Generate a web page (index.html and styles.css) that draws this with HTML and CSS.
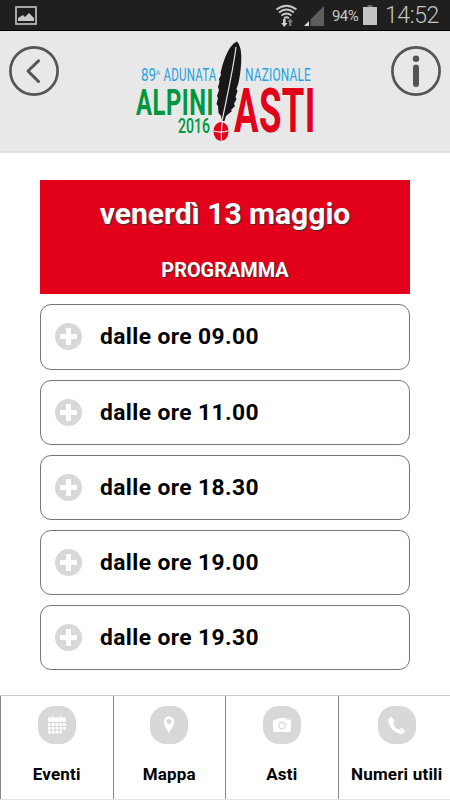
FILE: index.html
```html
<!DOCTYPE html>
<html lang="it">

<head>
    <meta charset="UTF-8">
    <meta name="viewport" content="width=device-width, initial-scale=1.0">
    <title>Alpini Asti 2016</title>
    <link rel="stylesheet" href="styles.css">
</head>

<body>
    <div class="statusbar">
        <svg class="picture" width="22" height="19" viewBox="0 0 22 19">
            <rect x="1" y="1" width="20" height="17" fill="none" stroke="#b5b5b5" stroke-width="1.8" />
            <path d="M3 15v-3l5-3 2 2 4-4 5 5v3z" fill="#c8c8c8" />
        </svg>
        <div class="status">
            <svg class="wifi" width="24" height="24" viewBox="0 0 24 24">
                <g fill="none" stroke="#c8c8c8" stroke-width="1.800">
                    <path d="M1.500 5.500q10-7.500 20 0M4 8.500q7.500-6 15 0M6.500 11.500q5-4 10 0M9 14.300q2.500-2 5 0" />
                </g>
                <path d="M8 15h2.600v4h2l-3.300 4-3.300-4h2z" fill="#d0d0d0" />
                <path d="M14 22v-4h-1.800l3-3.500 3 3.500h-1.800v4z" fill="#777" />
            </svg>
            <svg class="signal" width="20" height="20" viewBox="0 0 20 20">
                <path d="M20 0v20H6.500v-6.500z" fill="#5e5e5e" />
                <path d="M0 20l5-5v5z" fill="#ddd" />
            </svg>
            <span class="percent">94%</span>
            <svg class="battery" width="14" height="20" viewBox="0 0 14 20">
                <path d="M4.500 0h5v2h-5z" fill="#666" />
                <path d="M0 2h14v18H0z" fill="#c5c5c5" />
            </svg>
            <span class="clock">14:52</span>
        </div>
    </div>

    <header class="header">
        <svg class="round" width="50" height="50" viewBox="0 0 50 50">
            <g fill="none" stroke="#555" stroke-linecap="round" stroke-linejoin="round">
                <circle cx="25" cy="25" r="23.600" stroke-width="2.700" />
                <path d="M29.500 14.800L19 25l10.500 10.500" stroke-width="3" />
            </g>
        </svg>
        <svg class="logo" width="190" height="112" viewBox="130 40 190 112">
            <g fill="#1fa3e0" font-size="17.500">
                <text x="141" y="81" textLength="15" lengthAdjust="spacingAndGlyphs">89</text>
                <text x="156" y="74.500" font-size="8" textLength="4" lengthAdjust="spacingAndGlyphs">A</text>
                <text x="163.500" y="81" letter-spacing="0.300" textLength="53" lengthAdjust="spacingAndGlyphs">ADUNATA</text>
                <text x="245" y="81" letter-spacing="0.300" textLength="66" lengthAdjust="spacingAndGlyphs">NAZIONALE</text>
            </g>
            <g fill="#009640">
                <text x="136" y="115" font-size="36.500" font-weight="700" letter-spacing="0.800" textLength="78" lengthAdjust="spacingAndGlyphs">ALPINI</text>
                <text x="178" y="132.500" font-size="21" font-weight="500" textLength="32" lengthAdjust="spacingAndGlyphs">2016</text>
            </g>
            <text x="234" y="131.500" font-size="62" font-weight="700" fill="#e2001a" letter-spacing="0.800" textLength="82" lengthAdjust="spacingAndGlyphs">ASTI</text>
            <!-- penna -->
            <path d="M236 42C229.500 45 224.500 58 222 67l-1.500 6 .500 2-2 4 .500 3-1.500 5 1 3-2 6 1 2-1.500 6 1.500 2 .500 7 2.500 3 1 5h2.500l1.500-5 6-5-1-1 4-4-1-2 2.500-5-1-2 2-6-1-2 2-6c3-13 4-31 1-37-.800-3-2-4.500-3.500-4.500z" fill="#1a171b" />
            <path d="M236 47C233.500 68 227.500 94 222 121" fill="none" stroke="#e8e8e8" stroke-width="1.200" />
            <ellipse cx="221" cy="131.500" rx="7.500" ry="9.500" fill="#e2001a" />
            <path d="M213.500 131q8 2.500 15.500-.500M222.300 121.500q-1.500 10-.800 20" fill="none" stroke="#f3e6e6" stroke-width="1.200" />
        </svg>
        <svg class="round" width="50" height="50" viewBox="0 0 50 50">
            <circle cx="25" cy="25" r="23.600" fill="none" stroke="#555" stroke-width="2.700" />
            <circle cx="25" cy="12.800" r="3.200" fill="#555" />
            <rect x="22" y="18.500" width="6" height="22.500" rx="3" fill="#555" />
        </svg>
    </header>

    <main class="content">
        <div class="banner">
            <h1>venerdì 13 maggio</h1>
            <h2>PROGRAMMA</h2>
        </div>
        <ul class="hours">
            <li><i class="plus"></i><span>dalle ore 09.00</span></li>
            <li><i class="plus"></i><span>dalle ore 11.00</span></li>
            <li><i class="plus"></i><span>dalle ore 18.30</span></li>
            <li><i class="plus"></i><span>dalle ore 19.00</span></li>
            <li><i class="plus"></i><span>dalle ore 19.30</span></li>
        </ul>
    </main>

    <nav class="menu">
        <a>
            <svg width="38" height="38" viewBox="0 0 38 38">
                <rect width="38" height="38" rx="16" fill="#d8d8d8" />
                <path d="M10 11.500h4v-1h2v1h6v-1h2v1h4V16H10z" fill="#fff" />
                <path d="M10 18.500h18M10 22.300h18M10 26.200h14" stroke="#fff" stroke-width="2.800" stroke-dasharray="2.800 1" />
            </svg>
            <span>Eventi</span>
        </a>
        <a>
            <svg width="38" height="38" viewBox="0 0 38 38">
                <rect width="38" height="38" rx="16" fill="#d8d8d8" />
                <path d="M19 27.500c-1.500-4-5.200-8-5.200-12a5.200 5.200 0 0 1 10.400 0c0 4-3.700 8-5.200 12z" fill="#fff" />
                <circle cx="19" cy="15.500" r="2.500" fill="#d8d8d8" />
            </svg>
            <span>Mappa</span>
        </a>
        <a>
            <svg width="38" height="38" viewBox="0 0 38 38">
                <rect width="38" height="38" rx="16" fill="#d8d8d8" />
                <path d="M11.500 13.500H14l1.500-1.500h7l1.500 1.500h2.500q1.500 0 1.500 1.500v9.500q0 1.500-1.500 1.500h-15q-1.500 0-1.500-1.500V15q0-1.500 1.500-1.500z" fill="#fff" />
                <circle cx="19" cy="19.500" r="3.200" fill="none" stroke="#d8d8d8" stroke-width="1.200" />
            </svg>
            <span>Asti</span>
        </a>
        <a class="last">
            <svg width="38" height="38" viewBox="0 0 38 38">
                <rect width="38" height="38" rx="16" fill="#d8d8d8" />
                <path d="M10.300 13c-.500 4 2 8.500 5.200 11.300s7.500 4.400 10 3.500l-4-4.800-1.500.600c-2-1.300-3.800-3.300-4.800-5.200l.600-1.600-4-4.800z" fill="#fff" />
                <path d="M12.300 11.300l3.600 4.300M22.700 22.500l4 3.800" stroke="#fff" stroke-width="2.200" />
            </svg>
            <span>Numeri utili</span>
        </a>
    </nav>
</body>

</html>
```
FILE: styles.css
```css
* {
    padding: 0;
    margin: 0;
    box-sizing: border-box;
}

body {
    width: 450px;
    height: 800px;
    display: flex;
    flex-direction: column;
    background: white;
    color: black;
    font-family: Roboto, sans-serif;
    overflow: hidden;
}

svg {
    display: block;
    flex: none;
}

.statusbar {
    height: 31px;
    flex: none;
    padding: 0 11px 0 15px;
    display: flex;
    justify-content: space-between;
    background: #1f1f1f;
    border-bottom: 1px solid black;
    color: #c5c5c5;
}

.picture {
    margin-top: 6px;
}

.status {
    display: flex;
}

.wifi {
    margin-top: 4px;
}

.signal {
    margin: 6px 8px 0 5px;
}

.percent {
    width: 27px;
    margin-right: 4px;
    font-size: 15px;
    line-height: 32px;
    letter-spacing: -0.6px;
}

.battery {
    margin-top: 5px;
}

.clock {
    width: 54px;
    margin-left: 8px;
    font-size: 23px;
    font-weight: 300;
    line-height: 31px;
    letter-spacing: -0.4px;
}

.header {
    height: 122px;
    flex: none;
    padding: 9px 9px 0;
    display: flex;
    justify-content: space-between;
    background: #e8e8e8;
    border-bottom: 2px solid #e0e0e0;
}

.round {
    margin-top: 6px;
}

.logo {
    overflow: visible;
}

.content {
    flex: 1;
    padding: 27px 40px 0;
}

.banner {
    height: 114px;
    padding-top: 14px;
    background: #e2001a;
    color: white;
    text-align: center;
    text-shadow: 1px 1px 1px #333;
}

.banner h1 {
    font-size: 30px;
    line-height: 40px;
}

.banner h2 {
    margin-top: 22px;
    font-size: 19.9px;
    line-height: 30px;
}

.hours {
    margin-top: 10px;
    display: flex;
    flex-direction: column;
    gap: 10px;
    list-style: none;
}

.hours li {
    height: 65px;
    padding-left: 14px;
    display: flex;
    align-items: center;
    border: 1px solid #777;
    border-radius: 11px;
    font-size: 22.8px;
    font-weight: 700;
    letter-spacing: 0.4px;
}

.hours li:first-child {
    height: 66px;
    padding-bottom: 2px;
}

.plus {
    width: 27px;
    height: 27px;
    margin-right: 18px;
    border-radius: 50%;
    background:
        linear-gradient(white, white) center / 17px 5px no-repeat,
        linear-gradient(white, white) center / 5px 17px no-repeat,
        #d8d8d8;
}

.menu {
    height: 105px;
    flex: none;
    display: grid;
    grid-template-columns: repeat(4, 1fr);
    border-top: 1px solid #ccc;
    border-bottom: 1px solid #e2e2e2;
}

.menu a {
    padding-top: 10px;
    display: flex;
    flex-direction: column;
    align-items: center;
    border-left: 1px solid #888;
    font-size: 17px;
    font-weight: 700;
    letter-spacing: 0.2px;
    white-space: nowrap;
}

.menu .last {
    padding-left: 5px;
}

.menu span {
    margin-top: 20px;
    line-height: 20px;
}
```
